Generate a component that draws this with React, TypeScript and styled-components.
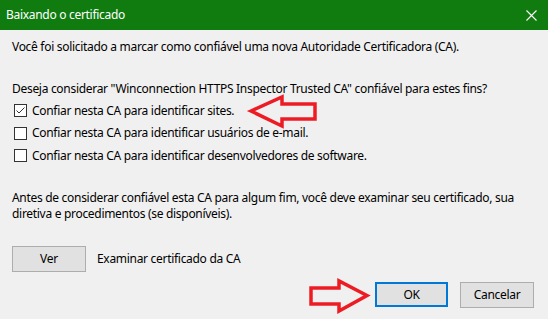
import React from "react";
import styled, { createGlobalStyle } from "styled-components";

const Global = createGlobalStyle`
  html, body { margin: 0; padding: 0; background: #f0f0f0; }
  body { font-family: "Noto Sans", "Segoe UI", sans-serif; font-size: 12px; letter-spacing: -0.3px; color: #000; }
`;

const Dialog = styled.div`
  position: relative;
  width: 548px;
  height: 319px;
  background: #f0f0f0;
  overflow: hidden;
`;

const TitleBar = styled.div`
  height: 30px;
  background: #107c10;
  color: #fff;
  display: flex;
  align-items: center;
  justify-content: space-between;
  padding: 0 11px 0 6px;
`;

const Title = styled.span`
  font-size: 12px;
  line-height: 16px;
`;

const Body = styled.div`
  padding: 9px 12px 0 12px;
  display: flex;
  flex-direction: column;
`;

const Text = styled.p<{ $mt?: number }>`
  margin: ${(p) => p.$mt ?? 0}px 0 0 0;
  line-height: 16px;
  white-space: nowrap;
`;

const CheckList = styled.div`
  margin-top: 7px;
  display: flex;
  flex-direction: column;
  gap: 9px;
  padding-left: 2px;
`;

const CheckRow = styled.label`
  display: flex;
  align-items: center;
  gap: 5px;
  height: 13.5px;
  line-height: 16px;
`;

const Box = styled.span`
  width: 11px;
  height: 11px;
  border: 1px solid #333;
  background: #fff;
  display: inline-flex;
  align-items: center;
  justify-content: center;
  flex: none;
`;

const ViewRow = styled.div`
  margin-top: 24px;
  display: flex;
  align-items: center;
  gap: 11px;
`;

const Button = styled.button<{ $default?: boolean }>`
  width: ${(p) => (p.$default ? 73 : 74)}px;
  height: ${(p) => (p.$default ? 25 : 26)}px;
  box-sizing: border-box;
  background: #e1e1e1;
  border: ${(p) => (p.$default ? "2px solid #0078d7" : "1px solid #adadad")};
  font-family: inherit;
  font-size: 12px;
  letter-spacing: inherit;
  color: #000;
  padding: 0;
  margin: 0;
`;

const Footer = styled.div`
  margin-top: 10px;
  display: flex;
  justify-content: flex-end;
  gap: 12px;
  padding-right: 2px;
`;

const Arrow = styled.svg<{ $x: number; $y: number }>`
  position: absolute;
  left: ${(p) => p.$x}px;
  top: ${(p) => p.$y}px;
  overflow: visible;
`;

const Check = () => (
  <svg width="11" height="11" viewBox="0 0 11 11">
    <path d="M1.5 5.5 L4 8 L9.5 2.5" fill="none" stroke="#333" strokeWidth="1" />
  </svg>
);

export default function App() {
  return (
    <>
      <Global />
      <Dialog>
        <TitleBar>
          <Title>Baixando o certificado</Title>
          <svg width="11" height="11" viewBox="0 0 11 11">
            <path d="M0.5 0.5 L10.5 10.5 M10.5 0.5 L0.5 10.5" stroke="#fff" strokeWidth="1.1" />
          </svg>
        </TitleBar>
        <Body>
          <Text>Você foi solicitado a marcar como confiável uma nova Autoridade Certificadora (CA).</Text>
          <Text $mt={26}>Deseja considerar "Winconnection HTTPS Inspector Trusted CA" confiável para estes fins?</Text>
          <CheckList>
            <CheckRow>
              <Box><Check /></Box>
              Confiar nesta CA para identificar sites.
            </CheckRow>
            <CheckRow>
              <Box />
              Confiar nesta CA para identificar usuários de e-mail.
            </CheckRow>
            <CheckRow>
              <Box />
              Confiar nesta CA para identificar desenvolvedores de software.
            </CheckRow>
          </CheckList>
          <Text $mt={27}>
            Antes de considerar confiável esta CA para algum fim, você deve examinar seu certificado, sua
          </Text>
          <Text>diretiva e procedimentos (se disponíveis).</Text>
          <ViewRow>
            <Button>Ver</Button>
            <span>Examinar certificado da CA</span>
          </ViewRow>
          <Footer>
            <Button $default>OK</Button>
            <Button>Cancelar</Button>
          </Footer>
        </Body>
        <Arrow $x={249} $y={95} width="69" height="33" viewBox="0 0 69 33">
          <path
            d="M2 16 L33 2 L33 9 L66 9 L66 24 L33 24 L33 31 Z"
            fill="none"
            stroke="#ed1c24"
            strokeWidth="3.5"
            strokeLinejoin="miter"
          />
        </Arrow>
        <Arrow $x={309} $y={279} width="60" height="34" viewBox="0 0 60 34">
          <path
            d="M58 16.5 L30 2 L30 9 L2 9 L2 25 L30 25 L30 32 Z"
            fill="none"
            stroke="#ed1c24"
            strokeWidth="3.5"
          />
        </Arrow>
      </Dialog>
    </>
  );
}
